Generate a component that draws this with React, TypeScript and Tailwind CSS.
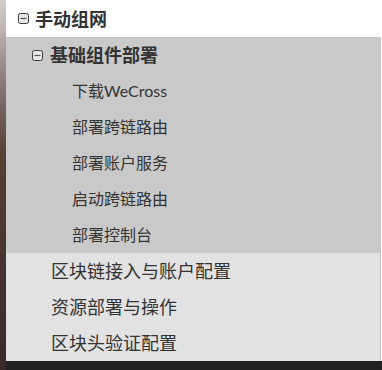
import React from 'react';

const font = { fontFamily: 'Lato, "Noto Sans CJK SC", sans-serif' };

function MinusBox() {
  return (
    <svg width="11" height="11" viewBox="0 0 11 11" className="shrink-0">
      <rect x="0.5" y="0.5" width="10" height="10" rx="2" fill="#e8e8e8" stroke="#3a3a3a" />
      <line x1="2.5" y1="5.5" x2="8.5" y2="5.5" stroke="#555" strokeWidth="1.2" />
    </svg>
  );
}

const children = ['下载WeCross', '部署跨链路由', '部署账户服务', '启动跨链路由', '部署控制台'];
const others = ['区块链接入与账户配置', '资源部署与操作', '区块头验证配置'];

export default function App() {
  return (
    <div className="flex h-[370px] w-[382px] bg-[#fdfdfd] text-[#333]" style={font}>
      <div className="w-[6px] shrink-0 bg-[linear-gradient(180deg,#d3cdc6_0%,#bdb5ae_8%,#8a7a78_22%,#6e5a55_32%,#5a3f33_42%,#4a3530_65%,#3a2b28_100%)]" />
      <div className="flex flex-1 flex-col">
        <div className="flex h-[37px] items-center gap-[6px] pl-[12px]">
          <MinusBox />
          <span className="text-[18px] font-bold leading-none">手动组网</span>
        </div>
        <div className="mr-[1px] bg-[#c9c9c9]">
          <div className="flex h-[36px] items-center gap-[7px] pl-[26px]">
            <MinusBox />
            <span className="text-[18px] font-bold leading-none">基础组件部署</span>
          </div>
          {children.map(c => (
            <div key={c} className="flex h-[36px] items-center pl-[66px] text-[16px]">{c}</div>
          ))}
        </div>
        <div className="mr-[1px] border-r border-[#c9c9c9] bg-[#e2e2e2]">
          {others.map(o => (
            <div key={o} className="flex h-[36px] items-center pl-[45px] text-[18px]">{o}</div>
          ))}
        </div>
        <div className="flex-1 bg-[#222]" />
      </div>
    </div>
  );
}
